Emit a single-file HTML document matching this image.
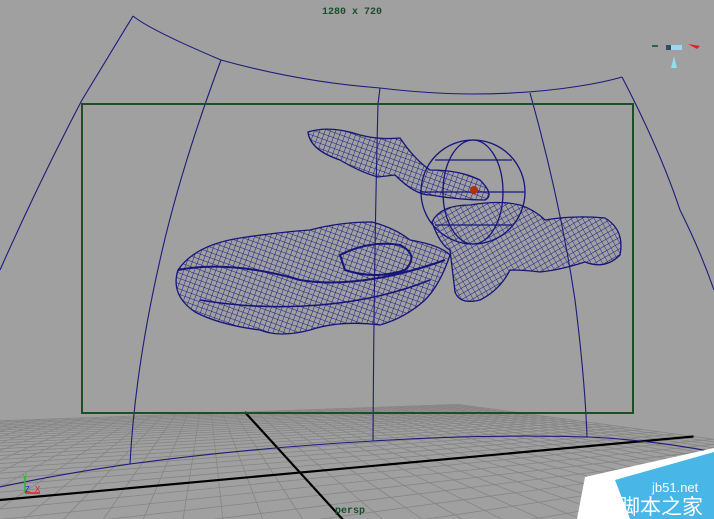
<!DOCTYPE html>
<html><head><meta charset="utf-8"><style>
html,body{margin:0;padding:0;background:#a0a0a0;width:714px;height:519px;overflow:hidden}
svg{position:absolute;left:0;top:0;display:block}
.t{font-family:"Liberation Mono",monospace;font-weight:bold;font-size:10px;fill:#1b4d2a}
</style></head><body>
<svg width="714" height="519" viewBox="0 0 714 519" xmlns="http://www.w3.org/2000/svg">
<defs>
<pattern id="h" width="5" height="5" patternUnits="userSpaceOnUse" patternTransform="rotate(20)">
<path d="M0 0H5M0 0V5" stroke="#1a1a85" stroke-width="1"/>
</pattern>
<pattern id="h2" width="5" height="5" patternUnits="userSpaceOnUse" patternTransform="rotate(-30)">
<path d="M0 0H5M0 0V5" stroke="#1a1a85" stroke-width="0.9"/>
</pattern>
</defs>
<g id="grid" stroke="#858585" stroke-width="0.8"></g>
<g id="axes" stroke="#000" stroke-width="2.2"></g>
<g fill="none" stroke="#1c1c7a" stroke-width="1.1">
<path d="M133 16 Q150 30 221 60 Q300 82 380 88 Q430 94 473 94 Q530 94 580 86 Q605 82 622 77"/>
<path d="M133 16 Q100 70 82 100 Q40 180 0 270"/>
<path d="M622 77 Q660 150 680 210 Q700 250 714 290"/>
<path d="M221 60 Q180 170 160 260 Q135 370 130 464"/>
<path d="M380 88 L378 104 Q374 260 373 441"/>
<path d="M530 93 Q560 200 575 300 Q585 380 587 437"/>
<path d="M0 487 Q60 474 130 464 Q250 448 373 441 Q480 434 590 437 Q650 440 714 452"/>
</g>
<rect x="82" y="104" width="551" height="309" fill="none" stroke="#1d4f25" stroke-width="2"/>
<g stroke="#16167a" stroke-width="1.3">
<path d="M308 132 Q330 125 360 135 Q380 140 400 138 Q415 160 430 170 Q460 170 480 180 Q495 195 485 200 Q460 200 430 195 Q415 195 395 175 L378 177 Q360 172 340 160 Q310 150 308 132Z" fill="url(#h)"/>
<circle cx="473" cy="192" r="52" fill="none"/>
<ellipse cx="473" cy="192" rx="30" ry="52" fill="none"/>
<path d="M421 192H525M435 160H512M435 225H512" fill="none"/>
<path d="M432 222 Q440 205 470 205 Q500 200 520 205 Q535 210 545 220 Q575 215 605 218 Q625 230 620 255 Q605 270 585 262 Q560 270 540 272 Q525 270 510 270 Q500 290 480 300 Q460 305 455 292 L450 250 Q440 245 432 222Z" fill="url(#h2)"/>
<path d="M178 270 Q195 245 240 238 Q280 232 310 230 Q340 222 372 222 Q395 228 410 240 Q440 245 450 255 Q440 285 425 300 Q405 318 380 325 Q340 320 310 330 Q280 338 260 330 Q220 325 195 312 Q170 295 178 270Z" fill="url(#h)"/>
<path d="M340 255 Q370 240 400 245 Q420 255 405 270 Q375 280 345 270Z" fill="none" stroke-width="2"/>
<path d="M178 270 Q230 260 300 280 Q360 290 445 260" fill="none" stroke-width="2"/>
<path d="M200 300 Q260 310 320 305 Q380 300 430 280" fill="none" stroke-width="1.6"/>
</g>
<circle cx="474" cy="190" r="4" fill="#b03010"/>
<rect x="666" y="45" width="16" height="5" fill="#8ee0f0"/><rect x="666" y="45" width="5" height="5" fill="#305060"/>
<path d="M688 44 L700 46 L697 49Z" fill="#e02020"/>
<rect x="652" y="45" width="6" height="2" fill="#306050"/>
<path d="M674 56 L677 68 L671 68Z" fill="#8ee0f0"/>
<path d="M25 493 V476" stroke="#20c020" stroke-width="1.5"/>
<path d="M25 493 H40" stroke="#e02020" stroke-width="1.5"/>
<text x="22" y="480" font-size="8" fill="#20c020" font-family="Liberation Sans">Y</text>
<text x="25" y="492" font-size="8" fill="#2020e0" font-family="Liberation Sans">Z</text>
<text x="35" y="492" font-size="8" fill="#e02020" font-family="Liberation Sans">X</text>
<text class="t" x="322" y="14">1280 x 720</text>
<text class="t" x="335" y="513" font-size="9">persp</text>
<polygon points="714,448 585,477 577,519 714,519" fill="#fff"/>
<polygon points="714,452 615,480 630,519 714,519" fill="#48b6e6"/>
<text x="652" y="492" font-family="Liberation Sans" font-size="13" fill="#fff">jb51.net</text>
<text x="619" y="514" font-family="'Noto Sans CJK SC',sans-serif" font-size="21" fill="#fff">脚本之家</text>
</svg>
<script>
(function(){
var g=document.getElementById('grid'),ax=document.getElementById('axes');
var f=400,cx=357,hy=370,th=-0.36,tx=-0.556,tz=3.9,c=Math.cos(th),s=Math.sin(th);
function P(x,z){var X=c*x+s*z+tx,Z=-s*x+c*z+tz;return [X,Z];}
function line(par,a,b){
 var A=P(a[0],a[1]),B=P(b[0],b[1]),zn=1.2;
 if(A[1]<zn&&B[1]<zn)return;
 if(A[1]<zn){var t=(zn-A[1])/(B[1]-A[1]);A=[A[0]+t*(B[0]-A[0]),zn];}
 if(B[1]<zn){var t=(zn-B[1])/(A[1]-B[1]);B=[B[0]+t*(A[0]-B[0]),zn];}
 var x1=cx+f*A[0]/A[1],y1=hy+f/A[1],x2=cx+f*B[0]/B[1],y2=hy+f/B[1];
 var l=document.createElementNS('http://www.w3.org/2000/svg','line');
 l.setAttribute('x1',x1);l.setAttribute('y1',y1);l.setAttribute('x2',x2);l.setAttribute('y2',y2);
 par.appendChild(l);}
var E=6,st=0.25;
for(var i=-E;i<=E+1e-6;i+=st){line(g,[i,-E],[i,E]);line(g,[-E,i],[E,i]);}
line(ax,[0,-E],[0,E]);line(ax,[-E,0],[E,0]);
})();
</script>
</body></html>
